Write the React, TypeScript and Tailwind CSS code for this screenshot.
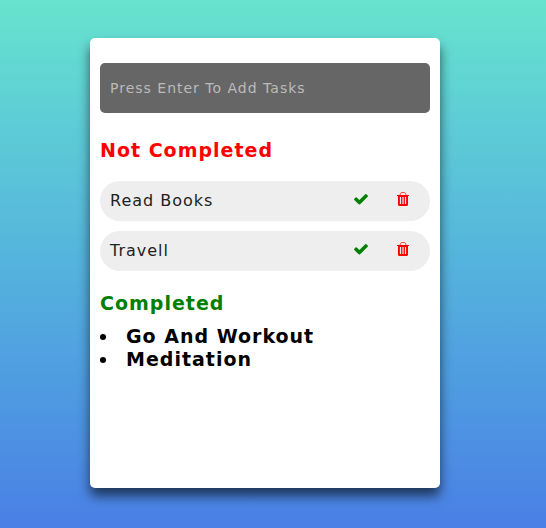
import { useState, type KeyboardEvent } from 'react';

function CheckIcon() {
  return (
    <svg viewBox="0 0 1792 1792" className="size-4 fill-current" aria-hidden="true">
      <path d="M1671 566q0 40-28 68l-724 724-136 136q-28 28-68 28t-68-28l-136-136-362-362q-28-28-28-68t28-68l136-136q28-28 68-28t68 28l294 295 656-657q28-28 68-28t68 28l136 136q28 28 28 68z" />
    </svg>
  );
}

function TrashIcon() {
  return (
    <svg viewBox="0 0 16 16" className="size-4 fill-none stroke-current" aria-hidden="true">
      <path d="M5 4 5.5 2.5Q5.8 1.5 6.8 1.5H9.2Q10.2 1.5 10.5 2.5L11 4" opacity="0.7" />
      <path d="M2 4.5H14" />
      <path d="M3 5H13V13.5Q13 15 11.5 15H4.5Q3 15 3 13.5Z" fill="currentColor" stroke="none" />
      <path d="M5.5 6V13M8 6V13M10.5 6V13" className="stroke-[#eee]" strokeWidth="1.2" />
    </svg>
  );
}

export default function App() {
  const [open, setOpen] = useState<string[]>(['Read Books', 'Travell']);
  const [done, setDone] = useState<string[]>(['Go And Workout', 'Meditation']);
  const [draft, setDraft] = useState('');

  const remove = (index: number) => setOpen(open.filter((_, i) => i !== index));

  const complete = (index: number) => {
    setDone([...done, open[index]]);
    remove(index);
  };

  const add = (event: KeyboardEvent<HTMLInputElement>) => {
    if (event.key === 'Enter' && draft.trim()) {
      setOpen([...open, draft.trim()]);
      setDraft('');
    }
  };

  return (
    <div className="flex min-h-screen items-center justify-center bg-linear-to-b from-[#67e3ce] to-[#4a7fe5] pr-4 pb-0.5 font-['DejaVu_Sans',Verdana,sans-serif] tracking-[1px]">
      <main className="min-h-[450px] w-full max-w-[350px] rounded-[5px] bg-white px-2.5 pt-[25px] pb-5 shadow-[0_8px_12px_rgba(0,0,0,0.6)]">
        <input
          type="text"
          aria-label="New task"
          placeholder="Press Enter To Add Tasks"
          value={draft}
          onChange={(event) => setDraft(event.target.value)}
          onKeyDown={add}
          className="block h-[50px] w-full rounded-[5px] bg-[#666] px-2.5 text-[14px] tracking-[1px] text-white outline-none placeholder:text-[#bbb]"
        />

        <section>
          <h2 className="mt-[25px] text-[19px] leading-6 font-bold text-[red]">Not Completed</h2>
          <ul className="mt-[19px] flex flex-col gap-2.5">
            {open.map((task, index) => (
              <li
                key={task}
                className="flex h-10 items-center justify-between rounded-full bg-[#eee] pr-[19px] pl-2.5 text-base text-[#222]"
              >
                <span>{task}</span>
                <span className="flex gap-[26px] pb-1">
                  <button type="button" aria-label={`Complete ${task}`} onClick={() => complete(index)} className="text-[green]">
                    <CheckIcon />
                  </button>
                  <button type="button" aria-label={`Delete ${task}`} onClick={() => remove(index)} className="text-[red]">
                    <TrashIcon />
                  </button>
                </span>
              </li>
            ))}
          </ul>
        </section>

        <section className="mt-5 text-[19px] font-bold">
          <h2 className="leading-6 text-[green]">Completed</h2>
          <ul className="mt-2.5 list-inside list-disc leading-[23px]">
            {done.map((task) => (
              <li key={task}>{task}</li>
            ))}
          </ul>
        </section>
      </main>
    </div>
  );
}
